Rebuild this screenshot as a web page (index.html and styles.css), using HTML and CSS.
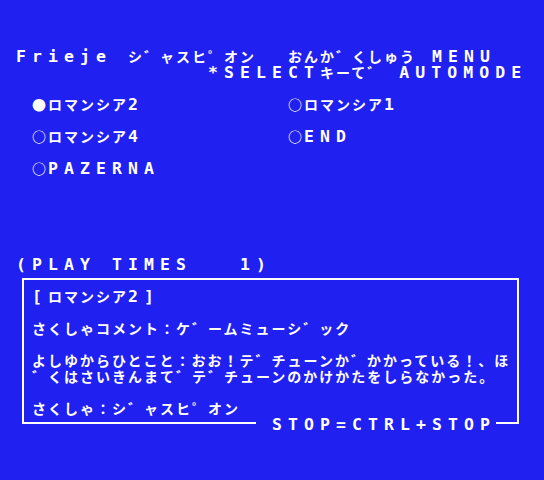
FILE: index.html
```html
<!DOCTYPE html>
<html lang="ja">
<head>
<meta charset="utf-8">
<title>Frieje MENU</title>
<link rel="stylesheet" href="styles.css">
</head>
<body>
<div class="screen">
  <div class="line"><span class="l">Frieje </span>シ゛ャスヒ゜オン<span class="l">  </span>おんか゛くしゅう<span class="l"> MENU</span></div>
  <div class="line indent12"><span class="l">*SELECT</span>キーて゛<span class="l"> AUTOMODE</span></div>
  <div class="line"></div>
  <div class="menu">
    <div class="line">●ロマンシア<span class="l">2</span></div>
    <div class="line">○ロマンシア<span class="l">1</span></div>
    <div class="line">○ロマンシア<span class="l">4</span></div>
    <div class="line">○<span class="l">END</span></div>
    <div class="line">○<span class="l">PAZERNA</span></div>
  </div>
  <div class="line"></div>
  <div class="line"></div>
  <div class="line"></div>
  <div class="line"></div>
  <div class="line"></div>
  <div class="line"><span class="l">(PLAY TIMES   1)</span></div>
  <div class="box">
    <div class="line"><span class="l">[</span>ロマンシア<span class="l">2]</span></div>
    <div class="line"></div>
    <div class="line">さくしゃコメント：ケ゛ームミューシ゛ック</div>
    <div class="line"></div>
    <div class="line">よしゆからひとこと：おお！テ゛チューンか゛かかっている！、ほ</div>
    <div class="line">゛くはさいきんまて゛テ゛チューンのかけかたをしらなかった。</div>
    <div class="line"></div>
    <div class="line">さくしゃ：シ゛ャスヒ゜オン</div>
    <div class="stop line"><span class="l">STOP=CTRL+STOP</span></div>
  </div>
</div>
</body>
</html>
```

FILE: styles.css
```css
html, body {
  margin: 0;
  padding: 0;
  background: #2020f0;
}
body {
  width: 544px;
  height: 480px;
  overflow: hidden;
  color: #ffffff;
}
.screen {
  padding: 48px 16px 0 16px;
  width: 512px;
  font-family: "Noto Sans CJK JP", sans-serif;
  font-size: 14px;
  font-weight: 700;
  letter-spacing: 2px;
}
.line {
  height: 16px;
  line-height: 16px;
  white-space: pre;
}
.l {
  font-family: "DejaVu Sans Mono", monospace;
  font-size: 16.5px;
  font-weight: 700;
  letter-spacing: 6.066px;
}
.indent12 {
  padding-left: 192px;
}
.menu {
  display: grid;
  grid-template-columns: 256px 240px;
  row-gap: 16px;
  padding-left: 16px;
}
.box {
  position: relative;
  margin: 6px 9px 0 6px;
  border: 2px solid #ffffff;
  padding: 8px 0 6px 8px;
}
.stop {
  position: absolute;
  top: 136px;
  left: 232px;
  width: 224px;
  padding-left: 16px;
  background: #2020f0;
}
```
